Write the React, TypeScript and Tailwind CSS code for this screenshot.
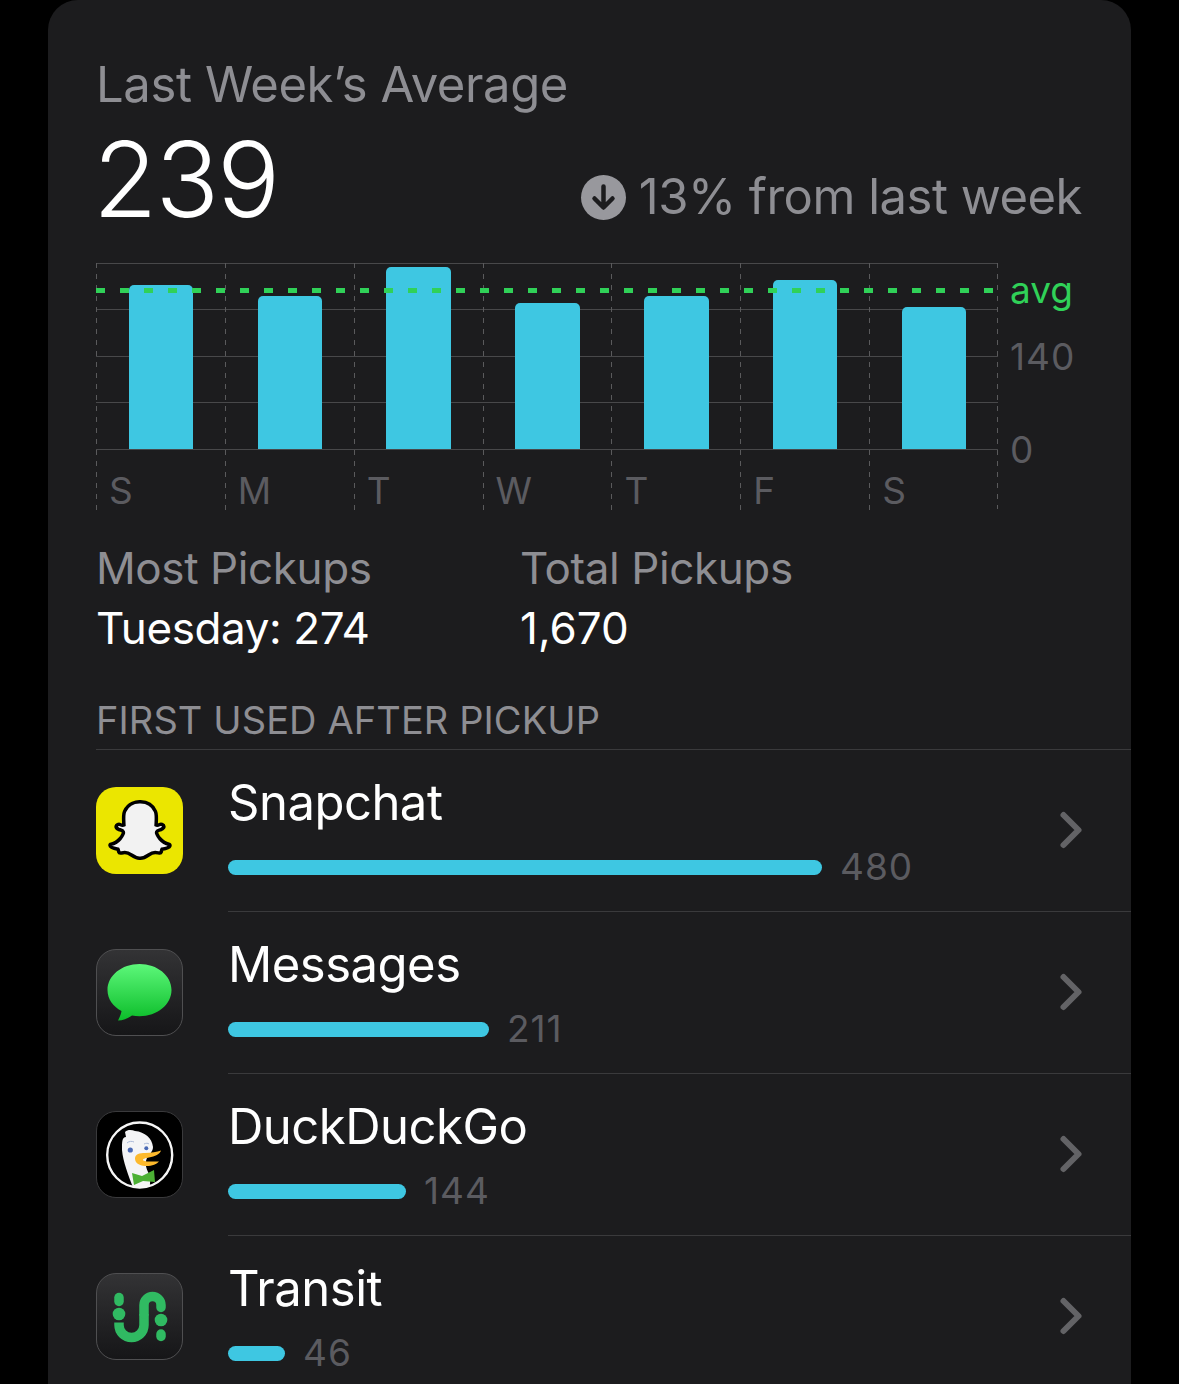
import { FaSnapchatGhost } from 'react-icons/fa'
import { ChevronRight } from 'lucide-react'

const days = [
  { label: 'S', bar: 'h-[164px]' },
  { label: 'M', bar: 'h-[153px]' },
  { label: 'T', bar: 'h-[182px]' },
  { label: 'W', bar: 'h-[146px]' },
  { label: 'T', bar: 'h-[153px]' },
  { label: 'F', bar: 'h-[169px]' },
  { label: 'S', bar: 'h-[142px]' },
]

function SnapchatIcon() {
  return (
    <div className="flex h-[87px] w-[87px] shrink-0 items-center justify-center rounded-[20px] bg-[#ebe600]">
      <FaSnapchatGhost className="h-[60px] w-[60px] overflow-visible text-[#f2f2f2]" stroke="#000" strokeWidth={30} />
    </div>
  )
}

function MessagesIcon() {
  return (
    <div className="h-[87px] w-[87px] shrink-0 overflow-hidden rounded-[20px] border border-[#4f4f51] bg-gradient-to-b from-[#333335] to-[#161618]">
      <svg viewBox="0 0 85 85" className="h-full w-full">
        <defs>
          <linearGradient id="msg" x1="0" y1="0" x2="0" y2="1">
            <stop offset="0" stopColor="#5df77a" />
            <stop offset="1" stopColor="#0cbd2a" />
          </linearGradient>
        </defs>
        <path
          d="M42.5 14C24.8 14 10.500 25.500 10.500 40C10.500 49 16 56.500 24.500 61C24 65 22 68 21 70.500C26 70.500 31 68.500 35 65.500C37.400 66 40 66.200 42.500 66.200C60.200 66.200 74.500 54.500 74.500 40C74.500 25.500 60.200 14 42.500 14Z"
          fill="url(#msg)"
        />
      </svg>
    </div>
  )
}

function DuckIcon() {
  return (
    <div className="h-[87px] w-[87px] shrink-0 overflow-hidden rounded-[20px] border border-[#3a3a3c] bg-black">
      <svg viewBox="0 0 85 85" className="h-full w-full">
        <defs>
          <clipPath id="ring">
            <circle cx="42.700" cy="43" r="33" />
          </clipPath>
        </defs>
        <g clipPath="url(#ring)">
          <path
            d="M28 20C31 17 35 18 38 19C48 20 55 26 56 35C56 40 52 42 50 46C47 52 50 58 52 62C54 68 53 73 52 78H37C32 65 26 50 25 38C25 30 25 25 29 25Z"
            fill="#f4f4f6"
          />
          <path d="M35 61L45 64L57 58L58 70L46 69L37 73Z" fill="#4cb034" />
        </g>
        <circle cx="42.700" cy="43" r="32.500" fill="none" stroke="#f6f6f6" strokeWidth="2.400" />
        <circle cx="33.300" cy="38" r="2.600" fill="#4a69b4" />
        <circle cx="49.300" cy="36.300" r="2" fill="#4a69b4" />
        <path d="M30 31C32 29 35 29 37 30M47 32C49 31 51 31 52 32" stroke="#a9b8d8" strokeWidth="1" fill="none" />
        <path
          d="M38 46.500C38 42 43 41 48 41C54 41 60 40 64 38.500C63 42 58 44.500 52 45.500C49 46 46 46.500 46 48C47 50 54 49.500 62 49.500C60 52 54 54.500 48 54C42 53.500 38 51 38 46.500Z"
          fill="#fdb92c"
        />
      </svg>
    </div>
  )
}

function TransitIcon() {
  return (
    <div className="h-[87px] w-[87px] shrink-0 overflow-hidden rounded-[20px] border border-[#4f4f51] bg-gradient-to-b from-[#333335] to-[#161618]">
      <svg viewBox="0 0 85 85" className="h-full w-full" fill="none" stroke="#30ba62" strokeWidth="9.500">
        <path d="M22 23.500V27.500" strokeLinecap="round" />
        <path d="M22 48.500V51A12.500 12.500 0 0 0 47 51V40" />
        <path d="M47 40V31A8.500 8.500 0 0 1 64 31V33.500" strokeLinecap="round" />
        <path d="M64 60V62.500" strokeLinecap="round" />
        <circle cx="22" cy="40" r="6.300" fill="#30ba62" stroke="none" />
        <circle cx="64" cy="46" r="6.300" fill="#30ba62" stroke="none" />
      </svg>
    </div>
  )
}

const apps = [
  { name: 'Snapchat', count: '480', bar: 'w-[594px]', icon: <SnapchatIcon /> },
  { name: 'Messages', count: '211', bar: 'w-[261px]', icon: <MessagesIcon /> },
  { name: 'DuckDuckGo', count: '144', bar: 'w-[178px]', icon: <DuckIcon /> },
  { name: 'Transit', count: '46', bar: 'w-[57px]', icon: <TransitIcon /> },
]

export default function App() {
  return (
    <div className="h-[1384px] overflow-hidden bg-black px-12 font-['Inter',sans-serif] text-white">
      <div className="h-[1420px] rounded-t-[30px] bg-[#1c1c1e] pl-12 pt-[57px]">
        {/* Header */}
        <h2 className="text-[49px] leading-[56px] tracking-[-0.4px] text-[#8e8e93]">Last Week’s Average</h2>
        <div className="mt-px flex h-[116px] items-start justify-between pr-[49px]">
          <span className="-ml-[3px] mt-[7px] text-[105px] leading-[116px] font-light tracking-[-2px]">239</span>
          <div className="mt-[55px] flex items-center gap-[13px] text-[#8e8e93]">
            <div className="flex h-[45px] w-[45px] items-center justify-center rounded-full bg-[#98989d]">
              <svg viewBox="0 0 45 45" className="h-[45px] w-[45px]" fill="none" stroke="#1c1c1e" strokeWidth="4.500" strokeLinecap="round" strokeLinejoin="round">
                <path d="M22.500 11.500V32M13.500 23.500L22.500 32.500L31.500 23.500" />
              </svg>
            </div>
            <span className="text-[49px] leading-[56px] tracking-[-0.5px]">13% from last week</span>
          </div>
        </div>

        {/* Chart */}
        <div className="mt-[33px] flex">
          <div className="relative h-[246px] w-[902px]">
            <div className="flex h-[187px] flex-col border-b border-[#48484a]">
              <div className="h-[46px] border-t border-[#48484a]" />
              <div className="h-[47px] border-t border-[#48484a]" />
              <div className="h-[46px] border-t border-[#48484a]" />
              <div className="h-[47px] border-t border-[#48484a]" />
            </div>
            <div className="absolute inset-0 grid grid-cols-7">
              {days.map((d, i) => (
                <div
                  key={i}
                  className="flex h-full flex-col bg-[repeating-linear-gradient(to_bottom,#5a5a5c_0,#5a5a5c_5px,transparent_5px,transparent_11px)] bg-[length:1px_100%] bg-left bg-no-repeat"
                >
                  <div className="flex h-[186px] items-end justify-center pl-px">
                    <div className={`w-[64.5px] rounded-t-[5px] bg-[#3ec7e2] ${d.bar}`} />
                  </div>
                  <span className="mt-5 pl-[13px] text-[37px] leading-[44px] text-[#5b5b60]">{d.label}</span>
                </div>
              ))}
            </div>
            <div className="absolute top-0 right-0 bottom-0 w-px bg-[repeating-linear-gradient(to_bottom,#5a5a5c_0,#5a5a5c_5px,transparent_5px,transparent_11px)]" />
            <div className="absolute top-[25px] right-0 left-0 h-[5px] bg-[repeating-linear-gradient(to_right,#30d158_0,#30d158_9px,transparent_9px,transparent_24px)]" />
          </div>
          <div className="ml-[12px] flex flex-col text-[37px] leading-[44px] text-[#5b5b60]">
            <span className="mt-[5px] text-[#30d158]">avg</span>
            <span className="mt-[23px] tracking-[1px]">140</span>
            <span className="mt-[49px]">0</span>
          </div>
        </div>

        {/* Totals */}
        <div className="mt-[30px] flex">
          <div className="w-[424px]">
            <div className="text-[44px] leading-[58px] tracking-[-0.4px] text-[#8e8e93]">Most Pickups</div>
            <div className="mt-px text-[44px] leading-[61px] tracking-[-0.4px]">Tuesday: 274</div>
          </div>
          <div>
            <div className="text-[44px] leading-[58px] tracking-[-0.4px] text-[#8e8e93]">Total Pickups</div>
            <div className="mt-px text-[44px] leading-[61px]">1,670</div>
          </div>
        </div>

        {/* First used */}
        <div className="mt-[37px] text-[38px] leading-[48px] tracking-[0.1px] text-[#8e8e93]">FIRST USED AFTER PICKUP</div>
        <div className="mt-[5px]">
          {apps.map((app, i) => (
            <div key={app.name} className="relative flex h-[162px] items-center">
              <div className={`absolute top-0 right-0 h-px bg-[#3a3a3c] ${i === 0 ? 'left-0' : 'left-[132px]'}`} />
              {app.icon}
              <div className="ml-[45px] flex-1 pt-px">
                <div className="text-[49px] leading-[60px] tracking-[-0.5px]">{app.name}</div>
                <div className="mt-[13px] flex h-[42px] items-center">
                  <div className={`h-[15px] rounded-full bg-[#3ec7e2] ${app.bar}`} />
                  <span className="ml-[18px] text-[37px] leading-[44px] tracking-[1px] text-[#5b5b60]">{app.count}</span>
                </div>
              </div>
              <ChevronRight className="mr-[30px] h-[60px] w-[60px] text-[#636366]" strokeWidth={2.400} />
            </div>
          ))}
        </div>
      </div>
    </div>
  )
}
